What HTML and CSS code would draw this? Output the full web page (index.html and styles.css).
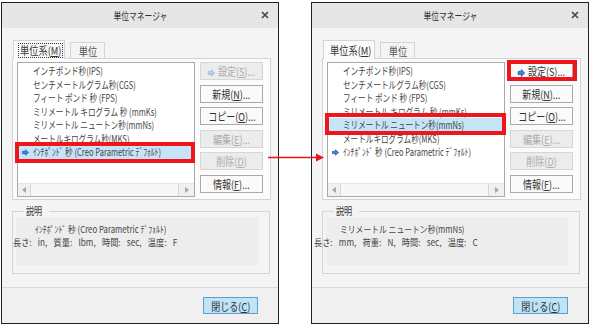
FILE: index.html
```html
<!DOCTYPE html>
<html lang="ja">
<head>
<meta charset="utf-8">
<title>単位マネージャ</title>
<link rel="stylesheet" href="styles.css">
</head>
<body>
<div class="stage">
  <div class="dialog dlg-a">
    <div class="titlebar">
      <span></span>
      <span class="title"><span class="t">単位マネージャ</span></span>
      <svg class="close" width="8" height="8" viewBox="0 0 8 8"><path d="M1 1L7 7M7 1L1 7" stroke="#4a4a4a" stroke-width="1.7"/></svg>
    </div>
    <div class="body">
      <div class="tabs">
        <div class="tab active"><span class="focus"><span class="t">単位系(<u>M</u>)</span></span></div>
        <div class="tab"><span class="t">単位</span></div>
      </div>
      <div class="panel">
        <div class="list">
          <div class="rows">
            <div class="row"><span class="t">インチポンド秒(IPS)</span></div>
            <div class="row"><span class="t">センチメートルグラム秒(CGS)</span></div>
            <div class="row"><span class="t">フィート ポンド 秒 (FPS)</span></div>
            <div class="row"><span class="t">ミリメートル キログラム 秒 (mmKs)</span></div>
            <div class="row"><span class="t">ミリメートル ニュートン秒(mmNs)</span></div>
            <div class="row"><span class="t">メートルキログラム秒(MKS)</span></div>
            <div class="row cur sel"><svg class="arr" width="7" height="7" viewBox="0 0 9 8"><path d="M0.5 2.5H4.5V0.5L8.5 4L4.5 7.5V5.5H0.5Z" fill="#3a8be0" stroke="#1c4a98" stroke-width=".8"/></svg><span class="t">ｲﾝﾁﾎﾟﾝﾄﾞ 秒 (Creo Parametric ﾃﾞﾌｫﾙﾄ)</span></div>
          </div>
          <div class="hscroll">
            <span class="sb-btn"><svg width="4" height="6" viewBox="0 0 4 6"><path d="M4 0L0 3L4 6Z" fill="#a6a6a6"/></svg></span>
            <span class="sb-thumb"></span>
            <span class="sb-btn sb-r"><svg width="4" height="6" viewBox="0 0 4 6"><path d="M0 0L4 3L0 6Z" fill="#a6a6a6"/></svg></span>
          </div>
        </div>
        <div class="buttons">
          <div class="btn off"><span class="t"><svg class="barr" width="10" height="8" viewBox="0 0 9 8"><path d="M0.5 2.5H4.5V0.5L8.5 4L4.5 7.5V5.5H0.5Z" fill="#b8cde6" stroke="#9db3cf" stroke-width=".7"/></svg>設定(<u>S</u>)...</span></div>
          <div class="btn"><span class="t">新規(<u>N</u>)...</span></div>
          <div class="btn"><span class="t">コピー(<u>O</u>)...</span></div>
          <div class="btn off"><span class="t">編集(<u>E</u>)...</span></div>
          <div class="btn off"><span class="t">削除(<u>D</u>)</span></div>
          <div class="btn"><span class="t">情報(<u>F</u>)...</span></div>
        </div>
      </div>
      <fieldset class="desc">
        <legend><span class="t">説明</span></legend>
        <div class="desc-box">
          <div class="l1"><span class="t">ｲﾝﾁﾎﾟﾝﾄﾞ 秒 (Creo Parametric ﾃﾞﾌｫﾙﾄ)</span></div>
          <div class="l2"><span class="t">長さ: in, 質量: lbm, 時間: sec, 温度: F</span></div>
        </div>
      </fieldset>
    </div>
    <div class="footer"><div class="btn primary"><span class="t">閉じる(<u>C</u>)</span></div></div>
    <div class="redbox rb-row-a"></div>
  </div>

  <div class="dialog dlg-b">
    <div class="titlebar">
      <span></span>
      <span class="title"><span class="t">単位マネージャ</span></span>
      <svg class="close" width="8" height="8" viewBox="0 0 8 8"><path d="M1 1L7 7M7 1L1 7" stroke="#4a4a4a" stroke-width="1.7"/></svg>
    </div>
    <div class="body">
      <div class="tabs">
        <div class="tab active"><span class="focus nofocus"><span class="t">単位系(<u>M</u>)</span></span></div>
        <div class="tab"><span class="t">単位</span></div>
      </div>
      <div class="panel">
        <div class="list">
          <div class="rows">
            <div class="row"><span class="t">インチポンド秒(IPS)</span></div>
            <div class="row"><span class="t">センチメートルグラム秒(CGS)</span></div>
            <div class="row"><span class="t">フィート ポンド 秒 (FPS)</span></div>
            <div class="row"><span class="t">ミリメートル キログラム 秒 (mmKs)</span></div>
            <div class="row sel"><span class="t">ミリメートル ニュートン秒(mmNs)</span></div>
            <div class="row"><span class="t">メートルキログラム秒(MKS)</span></div>
            <div class="row cur"><svg class="arr" width="7" height="7" viewBox="0 0 9 8"><path d="M0.5 2.5H4.5V0.5L8.5 4L4.5 7.5V5.5H0.5Z" fill="#3a8be0" stroke="#1c4a98" stroke-width=".8"/></svg><span class="t">ｲﾝﾁﾎﾟﾝﾄﾞ 秒 (Creo Parametric ﾃﾞﾌｫﾙﾄ)</span></div>
          </div>
          <div class="hscroll">
            <span class="sb-btn"><svg width="4" height="6" viewBox="0 0 4 6"><path d="M4 0L0 3L4 6Z" fill="#a6a6a6"/></svg></span>
            <span class="sb-thumb"></span>
            <span class="sb-btn sb-r"><svg width="4" height="6" viewBox="0 0 4 6"><path d="M0 0L4 3L0 6Z" fill="#a6a6a6"/></svg></span>
          </div>
        </div>
        <div class="buttons">
          <div class="btn"><span class="t"><svg class="barr" width="10" height="8" viewBox="0 0 9 8"><path d="M0.5 2.5H4.5V0.5L8.5 4L4.5 7.5V5.5H0.5Z" fill="#3a8be0" stroke="#1c4a98" stroke-width=".8"/></svg>設定(<u>S</u>)...</span></div>
          <div class="btn"><span class="t">新規(<u>N</u>)...</span></div>
          <div class="btn"><span class="t">コピー(<u>O</u>)...</span></div>
          <div class="btn off"><span class="t">編集(<u>E</u>)...</span></div>
          <div class="btn off"><span class="t">削除(<u>D</u>)</span></div>
          <div class="btn"><span class="t">情報(<u>F</u>)...</span></div>
        </div>
      </div>
      <fieldset class="desc">
        <legend><span class="t">説明</span></legend>
        <div class="desc-box">
          <div class="l1"><span class="t">ミリメートル ニュートン秒(mmNs)</span></div>
          <div class="l2"><span class="t">長さ: mm, 荷重: N, 時間: sec, 温度: C</span></div>
        </div>
      </fieldset>
    </div>
    <div class="footer"><div class="btn primary"><span class="t">閉じる(<u>C</u>)</span></div></div>
    <div class="redbox rb-row-b"></div>
    <div class="redbox rb-set"></div>
  </div>

  <svg class="bigarrow" width="62" height="12" viewBox="0 0 62 12"><path d="M2 5.5H52" stroke="#e8141b" stroke-width="1.6"/><path d="M50 1.5L58 5.5L50 9.5Z" fill="#e8141b"/></svg>
</div>
</body>
</html>
```

FILE: styles.css
```css
* { box-sizing: border-box; }
html, body { margin: 0; padding: 0; background: #fff; }
body {
  width: 591px;
  height: 327px;
  overflow: hidden;
  font-family: "Noto Sans CJK JP", "Noto Sans", sans-serif;
  font-size: 10px;
  color: #3a3a3a;
}
u { text-decoration: underline; text-underline-offset: 1px; }

.stage {
  position: relative;
  display: flex;
  gap: 32px;
  padding: 2px 0 0 1px;
}

.t {
  display: inline-block;
  white-space: nowrap;
  transform: scaleX(.77);
}

/* dialog */
.dialog {
  position: relative;
  width: 278px;
  height: 322px;
  border: 1px solid #222;
  background: #f4f4f4;
  display: flex;
  flex-direction: column;
}
.titlebar {
  height: 25px;
  background: #e6e6e6;
  display: grid;
  grid-template-columns: 1fr auto 1fr;
  align-items: center;
}
.title { font-size: 10.5px; color: #333; line-height: 14px; }
.title .t { transform: scaleX(.74); }
.close { justify-self: end; margin-right: 9px; margin-top: -1px; }

.body { padding: 12px 7px 0 10px; }

/* tabs */
.tabs { display: flex; align-items: flex-end; padding-left: 1px; height: 18px; }
.tab {
  height: 16px;
  width: 35px;
  margin-left: 5px;
  border: 1px solid #d4d4d4;
  border-bottom: none;
  background: #f4f4f4;
  display: flex;
  align-items: center;
  justify-content: center;
  font-size: 11px;
  color: #555;
}
.tab.active {
  height: 19px;
  width: 52px;
  margin-left: 0;
  margin-bottom: -1px;
  background: #fbfbfb;
  position: relative;
  z-index: 1;
  justify-content: flex-start;
  padding-left: 4px;
  align-items: flex-start;
  padding-top: 2px;
  color: #333;
}
.tab .t { transform: scaleX(.84); }
.focus {
  width: 45px;
  height: 15px;
  border: 1px dotted #333;
  display: flex;
  align-items: center;
  justify-content: center;
  line-height: 13px;
}
.focus.nofocus { border-color: transparent; }

/* panel */
.panel {
  height: 142px;
  border: 1px solid #d4d4d4;
  background: #fbfbfb;
  display: flex;
  padding: 3px 6px 2px 4px;
}
.list {
  width: 178px;
  height: 135px;
  border: 1px solid #a9a9a9;
  background: #fff;
  display: flex;
  flex-direction: column;
  overflow: hidden;
}
.rows { flex: 1; padding-top: 1.25px; }
.row {
  height: 13.5px;
  line-height: 13.5px;
  display: flex;
  align-items: center;
  padding-left: 15px;
  color: #444;
  white-space: nowrap;
}
.row .t { transform-origin: 0 50%; transform: scaleX(.76); }
.row.cur { padding-left: 4px; }
.row .arr { flex: none; margin-right: 4px; }
.row.sel { background: #c6e4f8; }

.hscroll {
  height: 13px;
  display: flex;
  background: #f0f0f0;
  border-top: 1px solid #e6e6e6;
}
.sb-btn {
  width: 12px;
  display: flex;
  align-items: center;
  justify-content: center;
}
.sb-btn.sb-r { width: 15px; }
.sb-thumb {
  flex: 1;
  background: #f7f7f7;
  border-left: 1px solid #d8d8d8;
  border-right: 1px solid #d8d8d8;
}

/* buttons */
.buttons {
  margin-left: 5px;
  width: 63px;
  display: flex;
  flex-direction: column;
  gap: 4.6px;
}
.btn {
  height: 18px;
  border: 1px solid #a9a9a9;
  background: #fafafa;
  display: flex;
  align-items: center;
  justify-content: center;
  font-size: 11px;
  line-height: 14px;
  color: #333;
}
.btn .t { transform: scaleX(.82); }
.btn.off { border-color: #d6d6d6; background: #ececec; color: #ababab; }
.barr { margin-right: 3px; vertical-align: -1px; }

/* description */
.desc {
  margin: 5px 0 0 0;
  padding: 0 0 8px 0;
  border: 1px solid #d4d4d4;
  min-width: 0;
  width: 258px;
}
.desc legend {
  margin-left: 11px;
  padding: 0 2px;
  line-height: 12px;
  font-size: 10.5px;
  color: #333;
}
.desc legend .t { transform-origin: 0 50%; }
.desc-box {
  margin: 0 11px 0 3px;
  height: 48px;
  background: #ededed;
  padding-top: 5.5px;
  white-space: nowrap;
  font-size: 9.3px;
}
.l1, .l2 { height: 13.5px; line-height: 13.5px; color: #444; }
.l1 .t { transform-origin: 0 50%; transform: scaleX(.84); }
.l2 .t { transform-origin: 0 50%; transform: scaleX(.88); word-spacing: 5px; }
.dlg-a .l1 { margin-left: 19px; }
.dlg-a .l2 { margin-left: -3px; }
.dlg-b .l1 { margin-left: 14px; }
.dlg-b .l2 { margin-left: -12px; }

/* footer */
.footer {
  margin-top: auto;
  height: 36px;
  border-top: 1px solid #dadada;
  background: #f0f0f0;
  display: flex;
  justify-content: flex-end;
  align-items: flex-start;
  padding: 9px 20px 0 0;
}
.btn.primary {
  width: 55px;
  height: 17px;
  background: #bfe3f7;
  border-color: #5a9fd6;
}

/* red annotation boxes and arrow */
.redbox {
  position: absolute;
  border: 4px solid #f0141b;
}
.rb-row-a { left: 13px; top: 139px; width: 180px; height: 21px; }
.rb-row-b { left: 13px; top: 110px; width: 181px; height: 22px; }
.rb-set { left: 195px; top: 57px; width: 70px; height: 21px; }
.bigarrow { position: absolute; left: 266px; top: 152px; }
```
